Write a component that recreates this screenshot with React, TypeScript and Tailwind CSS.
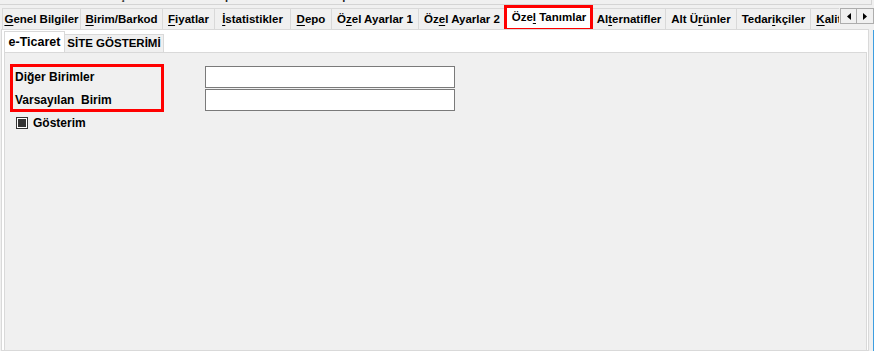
import React from "react";

type Tab = { label: string; u: number; w: number };

const tabs: Tab[] = [
  { label: "Genel Bilgiler", u: 0, w: 79 },
  { label: "Birim/Barkod", u: 0, w: 83 },
  { label: "Fiyatlar", u: 0, w: 53 },
  { label: "İstatistikler", u: 0, w: 77 },
  { label: "Depo", u: 0, w: 42 },
  { label: "Özel Ayarlar 1", u: 1, w: 88 },
  { label: "Özel Ayarlar 2", u: 2, w: 88 },
  { label: "Özel Tanımlar", u: 3, w: 88 },
  { label: "Alternatifler", u: 2, w: 74 },
  { label: "Alt Ürünler", u: 5, w: 72 },
  { label: "Tedarikçiler", u: 5, w: 75 },
  { label: "Kalite", u: 0, w: 44 },
];

function U({ text, u }: { text: string; u: number }) {
  return (
    <span className="whitespace-pre">
      {text.slice(0, u)}
      <span className="underline underline-offset-[2px]">{text.slice(u, u + 1)}</span>
      {text.slice(u + 1)}
    </span>
  );
}

export default function App() {
  return (
    <div
      className="relative w-[874px] h-[351px] overflow-hidden bg-[#f0f0f0] text-black flex flex-col"
      style={{ fontFamily: '"Liberation Sans", Arial, sans-serif' }}
    >
      {/* clipped top strip */}
      <div className="h-[5px] w-[872px] border-b border-r border-[#d4d4d4] overflow-hidden shrink-0">
        <div className="flex gap-[36px] -mt-[9px] text-[11px] font-bold leading-[10px] text-[#222] pl-[1px]">
          <span>Kodu</span>
          <span>Stok Adı Açıklaması</span>
          <span>Grup Kodu</span>
          <span>Ana Grup</span>
        </div>
      </div>

      {/* main tab row */}
      <div className="flex items-start mt-[2px] h-[22px] shrink-0">
        <div className="w-[837px] h-[22px] overflow-hidden flex items-end pl-[2px] pt-[3px] -mt-[3px] box-content">
          {tabs.map((t, i) => {
            const sel = i === 7;
            return (
              <div
                key={t.label}
                style={{ width: t.w }}
                className={
                  sel
                    ? "relative shrink-0 h-[23px] bg-white border border-b-0 border-[#d9d9d9] -ml-px flex items-center justify-center text-[11.5px] font-bold z-10"
                    : "relative shrink-0 h-[21px] bg-[#f0f0f0] border border-b-0 border-[#d9d9d9] -ml-px first:ml-0 flex items-center justify-center text-[11.5px] font-bold pt-[1px]"
                }
              >
                <U text={t.label} u={t.u} />
                {sel && (
                  <div className="absolute -left-[2px] -right-[1px] -top-[2px] bottom-[-2px] border-[3px] border-[#ff0000] pointer-events-none" />
                )}
              </div>
            );
          })}
        </div>
        <div className="flex mt-[1px] ml-[1px]">
          <div className="w-[17px] h-[16px] bg-[#f0f0f0] border border-[#adadad] flex items-center justify-center">
            <svg width="4" height="7" viewBox="0 0 4 7">
              <path d="M4 0 L0 3.5 L4 7 Z" fill="#000" />
            </svg>
          </div>
          <div className="w-[17px] h-[16px] bg-[#f0f0f0] border border-l-0 border-[#adadad] flex items-center justify-center">
            <svg width="4" height="7" viewBox="0 0 4 7">
              <path d="M0 0 L4 3.5 L0 7 Z" fill="#000" />
            </svg>
          </div>
        </div>
      </div>

      {/* outer page */}
      <div className="ml-[1px] w-[868px] flex-1 bg-white border border-[#d9d9d9] flex flex-col pt-[1px] pl-[1px] pr-[1px]">
        {/* sub tabs */}
        <div className="flex items-end h-[21px] shrink-0">
          <div className="ml-[1px] w-[61px] h-[21px] bg-white border border-b-0 border-[#d9d9d9] flex items-center justify-center text-[12.5px] font-bold z-10">
            e-Ticaret
          </div>
          <div className="-ml-px w-[100px] h-[18px] bg-[#f0f0f0] border border-b-0 border-[#d9d9d9] flex items-center justify-center text-[11.5px] font-bold pt-[1px]">
            SİTE GÖSTERİMİ
          </div>
        </div>

        {/* inner page */}
        <div className="ml-[1px] flex-1 bg-[#f0f0f0] border border-b-0 border-[#d9d9d9] pt-[13px] pl-[10px] text-[12px] font-bold">
          <div className="relative flex flex-col gap-[1px]">
            <div className="absolute -left-[5px] -top-[2px] w-[154px] h-[48px] border-[3px] border-[#ff0000] pointer-events-none" />
            <div className="flex items-center h-[22px]">
              <div className="w-[190px]">Diğer Birimler</div>
              <div className="w-[250px] h-[22px] bg-white border border-[#7a7a7a]" />
            </div>
            <div className="flex items-center h-[22px]">
              <div className="w-[190px] whitespace-pre">Varsayılan  Birim</div>
              <div className="w-[250px] h-[22px] bg-white border border-[#7a7a7a]" />
            </div>
          </div>
          <div className="flex items-center gap-[5px] mt-[6px] ml-[1px] h-[12px]">
            <div className="w-[12px] h-[12px] border border-[#333] bg-white p-[1px]">
              <div className="w-full h-full bg-[#333]" />
            </div>
            <span>Gösterim</span>
          </div>
        </div>
      </div>

      <div className="absolute right-0 top-[30px] bottom-0 w-px bg-[#3d9ee0]" />
    </div>
  );
}
